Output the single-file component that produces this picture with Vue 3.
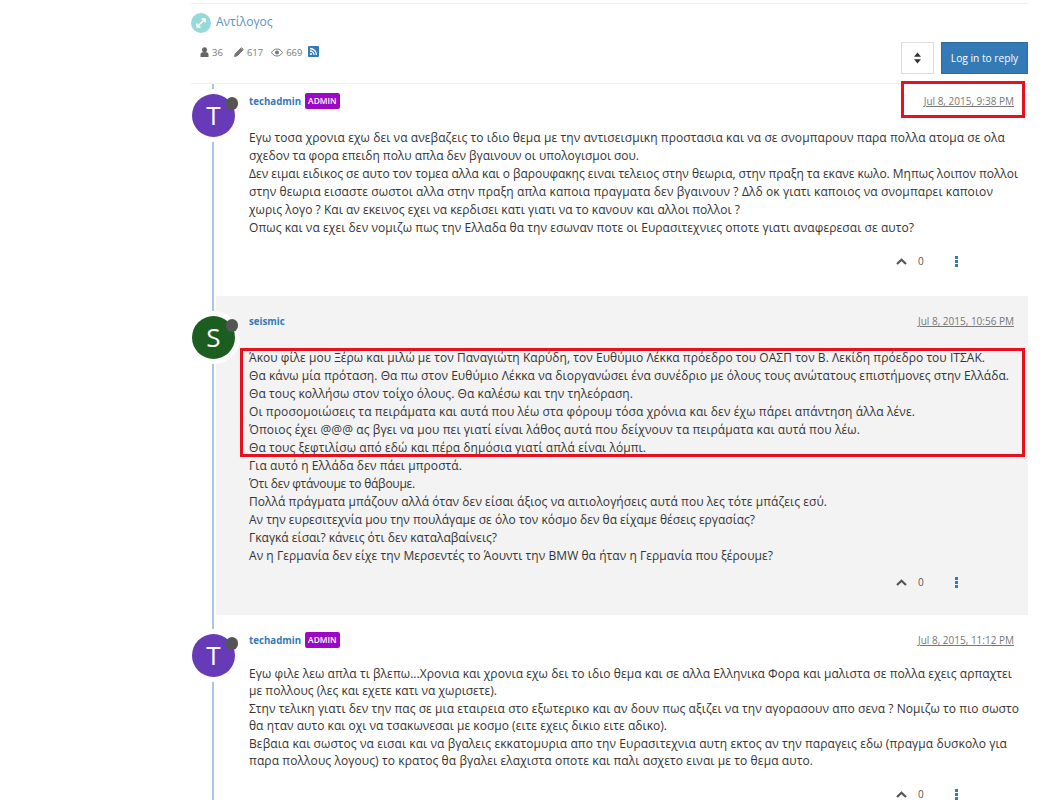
<script setup>
// Each line of a post keeps the width it has in the thread.
const vFit = {
  mounted(el, { value }) {
    const natural = el.getBoundingClientRect().width
    el.style.letterSpacing = (value - natural) / el.textContent.length + 'px'
  }
}
const first = [
  ['Εγω τοσα χρονια εχω δει να ανεβαζεις το ιδιο θεμα με την αντισεισμικη προστασια και να σε σνομπαρουν παρα πολλα ατομα σε ολα', 756],
  ['σχεδον τα φορα επειδη πολυ απλα δεν βγαινουν οι υπολογισμοι σου.', 390],
  ['Δεν ειμαι ειδικος σε αυτο τον τομεα αλλα και ο βαρουφακης ειναι τελειος στην θεωρια, στην πραξη τα εκανε κωλο. Μηπως λοιπον πολλοι', 769],
  ['στην θεωρια εισαστε σωστοι αλλα στην πραξη απλα καποια πραγματα δεν βγαινουν ? Δλδ οκ γιατι καποιος να σνομπαρει καποιον', 744],
  ['χωρις λογο ? Και αν εκεινος εχει να κερδισει κατι γιατι να το κανουν και αλλοι πολλοι ?', 491],
  ['Οπως και να εχει δεν νομιζω πως την Ελλαδα θα την εσωναν ποτε οι Ευρασιτεχνιες οποτε γιατι αναφερεσαι σε αυτο?', 665]
]
const boxed = [
  ['Άκου φίλε μου Ξέρω και μιλώ με τον Παναγιώτη Καρύδη, τον Ευθύμιο Λέκκα πρόεδρο του ΟΑΣΠ τον Β. Λεκίδη πρόεδρο του ΙΤΣΑΚ.', 736],
  ['Θα κάνω μία πρόταση. Θα πω στον Ευθύμιο Λέκκα να διοργανώσει ένα συνέδριο με όλους τους ανώτατους επιστήμονες στην Ελλάδα.', 760],
  ['Θα τους κολλήσω στον τοίχο όλους. Θα καλέσω και την τηλεόραση.', 384],
  ['Οι προσομοιώσεις τα πειράματα και αυτά που λέω στα φόρουμ τόσα χρόνια και δεν έχω πάρει απάντηση άλλα λένε.', 666],
  ['Όποιος έχει @@@ ας βγει να μου πει γιατί είναι λάθος αυτά που δείχνουν τα πειράματα και αυτά που λέω.', 611],
  ['Θα τους ξεφτιλίσω από εδώ και πέρα δημόσια γιατί απλά είναι λόμπι.', 397]
]
const rest = [
  ['Για αυτό η Ελλάδα δεν πάει μπροστά.', 213],
  ['Ότι δεν φτάνουμε το θάβουμε.', 166],
  ['Πολλά πράγματα μπάζουν αλλά όταν δεν είσαι άξιος να αιτιολογήσεις αυτά που λες τότε μπάζεις εσύ.', 578],
  ['Αν την ευρεσιτεχνία μου την πουλάγαμε σε όλο τον κόσμο δεν θα είχαμε θέσεις εργασίας?', 506],
  ['Γκαγκά είσαι? κάνεις ότι δεν καταλαβαίνεις?', 248],
  ['Αν η Γερμανία δεν είχε την Μερσεντές το Άουντι την BMW θα ήταν η Γερμανία που ξέρουμε?', 524]
]
const third = [
  ['Εγω φιλε λεω απλα τι βλεπω...Χρονια και χρονια εχω δει το ιδιο θεμα και σε αλλα Ελληνικα Φορα και μαλιστα σε πολλα εχεις αρπαχτει', 763],
  ['με πολλους (λες και εχετε κατι να χωρισετε).', 248],
  ['Στην τελικη γιατι δεν την πας σε μια εταιρεια στο εξωτερικο και αν δουν πως αξιζει να την αγορασουν απο σενα ? Νομιζω το πιο σωστο', 770],
  ['θα ηταν αυτο και οχι να τσακωνεσαι με κοσμο (ειτε εχεις δικιο ειτε αδικο).', 418],
  ['Βεβαια και σωστος να εισαι και να βγαλεις εκκατομυρια απο την Ευρασιτεχνια αυτη εκτος αν την παραγεις εδω (πραγμα δυσκολο για', 758],
  ['παρα πολλους λογους) το κρατος θα βγαλει ελαχιστα οποτε και παλι ασχετο ειναι με το θεμα αυτο.', 564]
]
</script>

<template>
  <div class="page">
    <div class="topic">
      <div class="category">
        <span class="cat-icon">
          <svg width="12" height="12" viewBox="0 0 12 12"><path d="M2 10 10 2M6.500 2H10V5.500M2 6.500V10H5.500" fill="none" stroke="#fff" stroke-width="1.500"/></svg>
        </span>
        <a class="cat-name">Αντίλογος</a>
      </div>
      <div class="bar">
        <div class="stats">
          <svg class="st" width="9" height="10" viewBox="0 0 9 10"><circle cx="4.500" cy="2.700" r="2.500" fill="#666"/><path d="M0.500 10V7.500C0.500 5.800 2 5 4.500 5S8.500 5.800 8.500 7.500V10Z" fill="#666"/></svg>
          <span class="num n1">36</span>
          <svg class="st" width="10" height="10" viewBox="0 0 10 10"><path d="M0.500 9.500 1.200 6.800 6.800 1.200 8.800 3.200 3.200 8.800ZM7.500 0.500 9.500 2.500" fill="#777" stroke="#777"/></svg>
          <span class="num n2">617</span>
          <svg class="st" width="12" height="9" viewBox="0 0 12 9"><path d="M0.500 4.500C2 2 4 1 6 1s4 1 5.500 3.500C10 7 8 8 6 8S2 7 0.500 4.500Z" fill="none" stroke="#777"/><circle cx="6" cy="4.500" r="2" fill="#777"/></svg>
          <span class="num n3">669</span>
          <span class="rss">
            <svg width="11" height="11" viewBox="0 0 11 11"><rect width="11" height="11" rx="1" fill="#337ab7"/><circle cx="3" cy="8" r="1.100" fill="#fff"/><path d="M2 5a4 4 0 0 1 4 4M2 2.500A6.500 6.500 0 0 1 8.500 9" fill="none" stroke="#fff" stroke-width="1.300"/></svg>
          </span>
        </div>
        <div class="actions">
          <button class="sort">
            <svg width="7" height="12" viewBox="0 0 7 12"><path d="M3.500 0.500 7 4.800H0ZM3.500 11.500 0 7.200H7Z" fill="#333"/></svg>
          </button>
          <button class="reply">Log in to reply</button>
        </div>
      </div>

      <div class="timeline">
        <article class="post p1">
          <div class="avatar purple"><span>T</span><i class="status"></i></div>
          <div class="main">
            <header class="head">
              <a class="user">techadmin</a><span class="badge">ADMIN</span>
              <a class="date boxed-date">Jul 8, 2015, 9:38 PM</a>
            </header>
            <div class="content c1">
              <p v-for="[t, w] in first" :key="t" v-fit="w">{{ t }}</p>
            </div>
            <footer class="foot f1">
              <svg class="up" width="11" height="7" viewBox="0 0 11 7"><path d="M1 6 5.500 1.700 10 6" fill="none" stroke="#555" stroke-width="2.200"/></svg>
              <span class="votes">0</span>
              <span class="dots"><i></i><i></i><i></i></span>
            </footer>
          </div>
        </article>

        <article class="post p2">
          <div class="avatar green"><span>S</span><i class="status"></i></div>
          <div class="main">
            <header class="head">
              <a class="user">seismic</a>
              <a class="date">Jul 8, 2015, 10:56 PM</a>
            </header>
            <div class="content c2">
              <div class="highlight">
                <p v-for="[t, w] in boxed" :key="t" v-fit="w">{{ t }}</p>
              </div>
              <p v-for="[t, w] in rest" :key="t" v-fit="w">{{ t }}</p>
            </div>
            <footer class="foot f2">
              <svg class="up" width="11" height="7" viewBox="0 0 11 7"><path d="M1 6 5.500 1.700 10 6" fill="none" stroke="#555" stroke-width="2.200"/></svg>
              <span class="votes">0</span>
              <span class="dots"><i></i><i></i><i></i></span>
            </footer>
          </div>
        </article>

        <article class="post p3">
          <div class="avatar purple"><span>T</span><i class="status"></i></div>
          <div class="main">
            <header class="head">
              <a class="user">techadmin</a><span class="badge">ADMIN</span>
              <a class="date">Jul 8, 2015, 11:12 PM</a>
            </header>
            <div class="content c3">
              <p v-for="[t, w] in third" :key="t" v-fit="w">{{ t }}</p>
            </div>
            <footer class="foot f3">
              <svg class="up" width="11" height="7" viewBox="0 0 11 7"><path d="M1 6 5.500 1.700 10 6" fill="none" stroke="#555" stroke-width="2.200"/></svg>
              <span class="votes">0</span>
              <span class="dots"><i></i><i></i><i></i></span>
            </footer>
          </div>
        </article>
      </div>
    </div>
  </div>
</template>

<style>
html, body { margin: 0; background: #fff; overflow: hidden; }
</style>

<style scoped>
.page {
  height: 800px;
  overflow: hidden;
  font-family: "Open Sans", "Noto Sans", sans-serif;
  font-size: 12px;
  color: #333;
}
.topic {
  margin-left: 191px;
  width: 837px;
  padding-top: 3px;
}
.category {
  border-top: 1px solid #eee;
  height: 31px;
  padding-top: 9px;
  display: flex;
  align-items: flex-start;
}
.cat-icon {
  width: 20px;
  height: 20px;
  border-radius: 50%;
  background: #97d8d9;
  display: flex;
  align-items: center;
  justify-content: center;
}
.cat-name {
  margin-left: 5px;
  color: #5c91c4;
  font-size: 12px;
  line-height: 18px;
}
.bar {
  height: 39px;
  display: flex;
  justify-content: space-between;
  align-items: flex-start;
  border-bottom: 1px solid #eee;
}
.stats {
  display: flex;
  align-items: center;
  height: 14px;
  padding-left: 9px;
  margin-top: 1px;
  font-size: 9.500px;
  color: #777;
}
.num { margin-left: 3px; }
.n1 { margin-right: 11px; }
.n2 { margin-right: 8px; }
.n3 { margin-right: 6px; }
.rss { display: flex; margin-top: -2px; }
.actions {
  display: flex;
  gap: 7px;
  margin-top: -2px;
}
.sort {
  width: 33px;
  height: 32px;
  border: 1px solid #ddd;
  background: #fff;
  padding: 0;
  display: flex;
  align-items: center;
  justify-content: center;
}
.reply {
  width: 87px;
  height: 32px;
  border: 1px solid #2e6da4;
  background: #337ab7;
  color: #fff;
  padding: 0;
  font: 10.200px "Open Sans", "Noto Sans", sans-serif;
}
.timeline {
  position: relative;
  margin-left: 21px;
  border-left: 2px solid #a6c6e4;
}
.post {
  display: flex;
  margin-left: -22px;
}
.avatar {
  position: relative;
  flex: none;
  width: 43px;
  height: 43px;
  border-radius: 50%;
  color: #fff;
  font-size: 26px;
  line-height: 43px;
  text-align: center;
  box-shadow: 0 0 0 5px #fff;
}
.purple { background: #673ab7; }
.green { background: #1b5e20; }
.status {
  position: absolute;
  top: 3px;
  right: -3px;
  width: 12.500px;
  height: 12.500px;
  border-radius: 50%;
  background: #555;
}
.main { flex: 1; margin-left: 14px; min-width: 0; }
.head {
  display: flex;
  align-items: center;
  height: 18px;
  margin-top: -2px;
}
.user { color: #337ab7; font-weight: 700; font-size: 9.700px; }
.badge {
  margin-left: 4px;
  height: 16px;
  padding: 0 3px;
  background: #9c09c4;
  border-radius: 2px;
  color: #fff;
  font-size: 8.400px;
  font-weight: 600;
  line-height: 16px;
}
.date {
  position: relative;
  margin-left: auto;
  margin-right: 14px;
  color: #777;
  font-size: 10px;
  text-decoration: underline;
}
.boxed-date::after {
  content: "";
  position: absolute;
  left: -23px;
  right: -11px;
  top: -13px;
  bottom: -10px;
  border: 3px solid #e8101f;
}
.content p {
  margin: 0;
  width: fit-content;
  line-height: 18px;
  white-space: nowrap;
}
.highlight {
  height: 109px;
  box-sizing: border-box;
  margin: -1px 3px 0 -9px;
  padding: 1px 0 0 9px;
  outline: 3px solid #e8101f;
  outline-offset: -3px;
}
.foot {
  display: flex;
  align-items: center;
  height: 14px;
  padding-left: 647px;
  color: #555;
  font-size: 10px;
}
.votes { margin-left: 11px; }
.dots {
  margin-left: 31px;
  display: flex;
  flex-direction: column;
  gap: 1px;
}
.dots i {
  width: 3px;
  height: 3px;
  background: #337ab7;
  display: block;
}
.p1 { padding-top: 10px; height: 212px; box-sizing: border-box; }
.c1 { margin-top: 19px; }
.f1 { margin-top: 17px; }
.p2 {
  height: 319px;
  padding-top: 21px;
  box-sizing: border-box;
  background: linear-gradient(to right, transparent 24px, #f3f3f3 24px);
}
.p2 .head { margin-top: -5px; }
.p2 .avatar { margin-top: -1px; }
.c2 { margin-top: 19px; }
.f2 { margin-top: 10px; }
.p3 { padding-top: 19px; }
.p3 .head { margin-top: -3px; }
.c3 { margin-top: 15.500px; }
.c3 p { line-height: 17.500px; }
.f3 { margin-top: 17.500px; }
</style>
